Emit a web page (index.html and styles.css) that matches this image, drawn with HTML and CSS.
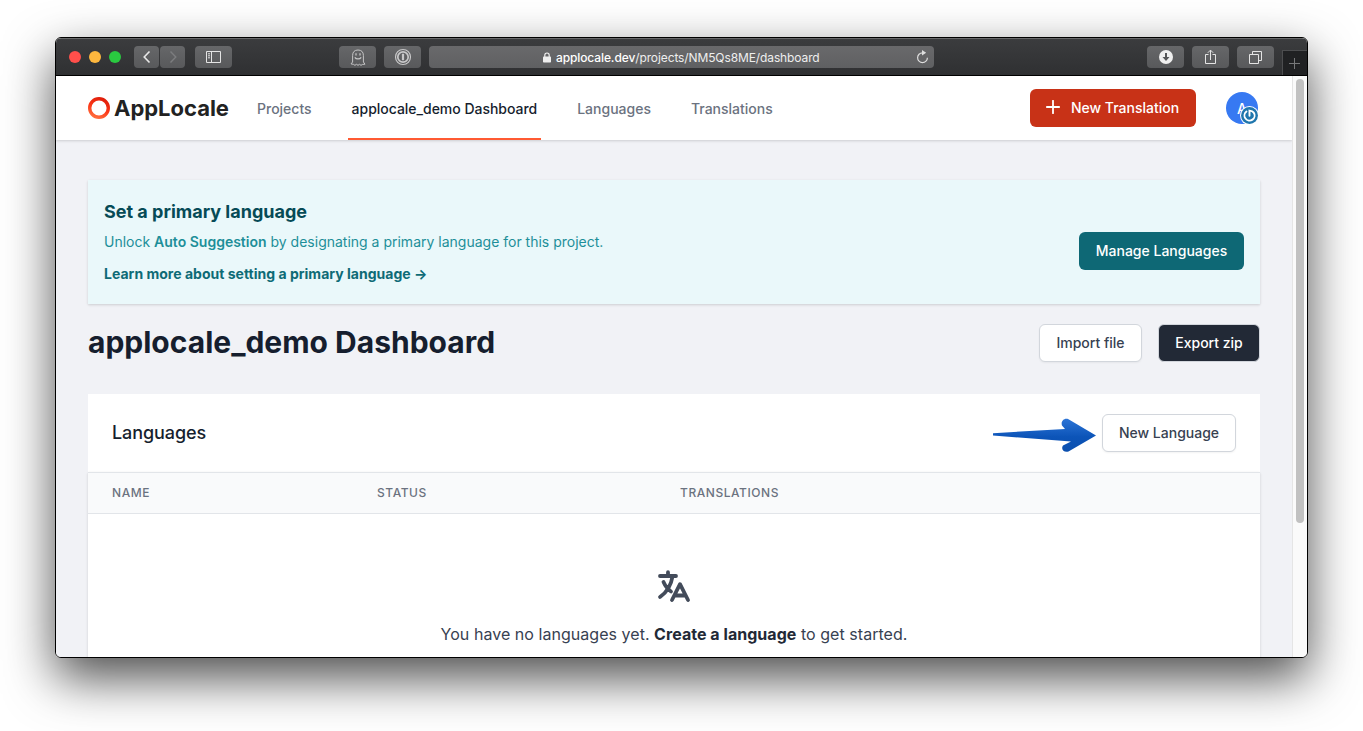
FILE: index.html
```html
<!DOCTYPE html>
<html lang="en">
<head>
<meta charset="utf-8">
<title>applocale_demo Dashboard</title>
<link rel="stylesheet" href="styles.css">
</head>
<body>
<div class="window">
  <div class="toolbar">
    <div class="lights"><i class="light red"></i><i class="light yellow"></i><i class="light green"></i></div>
    <div class="history">
      <span class="tool small"><svg width="10" height="14" viewBox="0 0 10 14"><path d="M7.5 1.5 2.2 7l5.3 5.5" fill="none" stroke="#e8e8e8" stroke-width="1.6"/></svg></span>
      <span class="tool small"><svg width="10" height="14" viewBox="0 0 10 14"><path d="M2.5 1.5 7.8 7l-5.3 5.5" fill="none" stroke="#7c7d7f" stroke-width="1.4"/></svg></span>
    </div>
    <span class="tool sidebar"><svg width="15" height="12" viewBox="0 0 15 12" fill="none" stroke="#e4e4e4"><path d="M.5.5h14v11H.5zM5.5.5v11M2 2.8h2M2 4.8h2M2 6.8h2"/></svg></span>
    <span class="tool ghost"><svg width="16" height="17" viewBox="0 0 16 17" fill="none" stroke="#c4c4c5"><path d="M2.6 13V6.500C2.600 3 4.500 1 8 1s5.400 2 5.400 5.500V13l1.600 2.200-2.400.2-1.600.9-1.500-1-1.500 1-1.500-1-1.600 1-1.500-1-2.400-.4z"/><path d="M6 4.200v2.300M10 4.200v2.300M4.800 8.300c1.400 2.200 5 2.200 6.400 0" stroke-width="1.300"/></svg></span>
    <span class="tool onepass"><svg width="18" height="18" viewBox="0 0 18 18" fill="none" stroke="#c8c8c9"><circle cx="9" cy="9" r="7.500" stroke-width="1.200"/><circle cx="9" cy="9" r="5.200" stroke-width="1.700"/><path d="M9 5.800v6.400" stroke-width="2.200"/></svg></span>
    <div class="address">
      <svg class="lock" width="8" height="11" viewBox="0 0 8 11"><path d="M1.800 5V3.200a2.200 2.200 0 0 1 4.400 0V5" fill="none" stroke="#eee" stroke-width="1.200"/><rect y="4.600" width="8" height="6" rx=".8" fill="#eee"/></svg>
      <span class="url"><span class="host">applocale.dev</span>/projects/NM5Qs8ME/dashboard</span>
      <svg class="reload" width="13" height="14" viewBox="0 0 13 14"><path d="M6.500 2.800A4.900 4.900 0 1 0 11.400 7.700" fill="none" stroke="#ddd" stroke-width="1.200"/><path d="M6 0v5.600l4.200-2.800z" fill="#ddd"/></svg>
    </div>
    <span class="tool download"><svg width="14" height="14" viewBox="0 0 14 14"><circle cx="7" cy="7" r="7" fill="#efefef"/><path d="M7 3v6" stroke="#555658" stroke-width="2"/><path d="M3.500 7h7L7 11z" fill="#555658"/></svg></span>
    <span class="tool share"><svg width="11" height="16" viewBox="0 0 11 16" fill="none" stroke="#e4e4e4"><path d="M3.500 5.500h-3v9h10v-9h-3M5.500 11V1.200M2.800 3.800 5.500 1.100l2.700 2.700"/></svg></span>
    <span class="tool tabs"><svg width="13" height="13" viewBox="0 0 13 13" fill="none" stroke="#e4e4e4"><path d="M.5 3.500h9v9h-9zM3.500 3.500v-3h9v9h-3"/></svg></span>
    <span class="newtab"><svg width="11" height="11" viewBox="0 0 11 11"><path d="M5.500 0v11M0 5.500h11" stroke="#77787a"/></svg></span>
  </div>
  <div class="viewport">
    <div class="page">
      <header class="header">
        <svg class="mark" width="22" height="22" viewBox="0 0 22 22"><defs><linearGradient id="ring" x1=".7" y1="0" x2=".3" y2="1"><stop offset="0" stop-color="#e01f0b"/><stop offset=".5" stop-color="#fb3617"/><stop offset="1" stop-color="#ff6a3b"/></linearGradient></defs><circle cx="11" cy="11" r="9.300" fill="none" stroke="url(#ring)" stroke-width="3.400"/></svg>
        <span class="brand">AppLocale</span>
        <nav class="nav">
          <a class="link projects">Projects</a>
          <a class="link active">applocale_demo Dashboard</a>
          <a class="link languages">Languages</a>
          <a class="link">Translations</a>
        </nav>
        <button class="btn primary"><svg width="14" height="14" viewBox="0 0 14 14"><path d="M7 .8v12.400M.8 7h12.400" stroke="#fff" stroke-width="1.800" stroke-linecap="round"/></svg><span>New Translation</span></button>
        <div class="avatar">A<svg class="badge" width="19" height="19" viewBox="0 0 18 18"><circle cx="9" cy="9" r="9" fill="#fff"/><circle cx="9" cy="9" r="8" fill="#1f76ad"/><path d="M6.100 5.200A4.800 4.800 0 1 0 13 6.300Q11.900 4.700 9 4.400V9.300" fill="none" stroke="#fff" stroke-width="1.800" stroke-linecap="round"/></svg></div>
      </header>
      <main class="main">
        <section class="notice">
          <div class="notice-text">
            <h2 class="notice-title">Set a primary language</h2>
            <p class="notice-body">Unlock <strong>Auto Suggestion</strong> by designating a primary language for this project.</p>
            <a class="notice-link">Learn more about setting a primary language →</a>
          </div>
          <button class="btn teal"><span>Manage Languages</span></button>
        </section>
        <div class="heading">
          <h1 class="title">applocale_demo Dashboard</h1>
          <button class="btn plain import"><span>Import file</span></button>
          <button class="btn dark"><span>Export zip</span></button>
        </div>
        <section class="card">
          <div class="card-head">
            <h3 class="card-title">Languages</h3>
            <svg class="arrow" width="104" height="36" viewBox="0 0 104 36"><defs><linearGradient id="blue" x1="0" y1="0" x2="0" y2="1"><stop offset="0" stop-color="#2c74d6"/><stop offset=".55" stop-color="#0c54b8"/><stop offset="1" stop-color="#0b4fae"/></linearGradient></defs><path d="M1 16.200 73 12 70 8.500C68.500 4.500 72 .5 76.500 2.200L104 18.500 76.500 34.500C72 36 68.500 32 71 28.500L79 24.600 1 18.500z" fill="url(#blue)"/></svg>
            <button class="btn plain newlang"><span>New Language</span></button>
          </div>
          <div class="table">
            <div class="columns"><span>NAME</span><span>STATUS</span><span>TRANSLATIONS</span></div>
            <div class="empty">
              <svg width="34" height="34" viewBox="0 0 34 34" fill="none" stroke="#434b5a" stroke-width="3.800" stroke-linecap="round" stroke-linejoin="round"><path d="M3 7h16M11 3.200V7M15.500 7.500C14 17 9.500 23.500 3 28M6.500 13c2 4.500 4.500 7.500 7.500 9.500M15 31 23 15.200 31 31M18 26.500h10"/></svg>
              <p class="empty-text">You have no languages yet. <strong>Create a language</strong> to get started.</p>
            </div>
          </div>
        </section>
      </main>
    </div>
    <div class="scrollbar"><div class="thumb"></div></div>
  </div>
</div>
</body>
</html>
```

FILE: styles.css
```css
* { box-sizing: border-box; }
body {
  margin: 0;
  height: 731px;
  overflow: hidden;
  padding: 37px 55px 0;
  background: #fff;
  font-family: Inter, "Liberation Sans", sans-serif;
  -webkit-font-smoothing: antialiased;
}
h1, h2, h3, p { margin: 0; }
svg { display: block; flex: none; }
button { font: inherit; }
.window {
  width: 1253px;
  height: 621px;
  border: 1px solid #000;
  border-radius: 6px;
  overflow: hidden;
  box-shadow: 0 20px 50px rgba(0, 0, 0, .7);
}
.toolbar {
  height: 38px;
  display: flex;
  align-items: center;
  padding-left: 13px;
  background: linear-gradient(#3b3c3e, #2f3032);
  border-top: 1px solid #68696a;
  border-bottom: 1px solid #000;
}
.lights { display: flex; gap: 8px; width: 65px; }
.light { width: 12px; height: 12px; border-radius: 50%; }
.red { background: #ff4f4b; }
.yellow { background: #fdb73e; }
.green { background: #2ac940; }
.history { display: flex; gap: 1px; }
.tool {
  width: 37px;
  height: 22px;
  flex: none;
  display: flex;
  align-items: center;
  justify-content: center;
  border-radius: 4px;
  background: linear-gradient(#666769, #58595b);
}
.small { width: 25px; }
.sidebar { margin-left: 10px; }
.ghost { margin-left: 107px; }
.onepass { margin-left: 8px; }
.address {
  width: 505px;
  height: 22px;
  margin-left: 8px;
  padding: 0 5px 0 114px;
  display: flex;
  align-items: center;
  border-radius: 4px;
  background: linear-gradient(#69696b, #5f6062);
  color: #eee;
  font-size: 12px;
  letter-spacing: -.11px;
}
.url { margin-left: 5px; flex: 1; white-space: nowrap; }
.host { font-weight: 500; color: #fff; }
.download { margin-left: 213px; }
.share, .tabs { margin-left: 8px; }
.newtab {
  align-self: flex-end;
  margin-left: 8px;
  width: 25px;
  height: 25px;
  display: flex;
  align-items: center;
  justify-content: center;
  padding-right: 2px;
  background: #202123;
  border: 1px solid #4c4d4f;
  border-width: 1px 0 0 1px;
}
.viewport { display: flex; height: 581px; }
.page { width: 1236px; background: #f1f2f6; }
.scrollbar {
  width: 15px;
  padding: 3px 3px 0;
  background: #fafafa;
  border-left: 1px solid #e5e5e5;
}
.thumb { width: 8px; height: 444px; border-radius: 4px; background: #c1c1c1; }
.header {
  height: 64px;
  display: flex;
  align-items: center;
  padding: 0 34px 0 32px;
  background: #fff;
  box-shadow: 0 1px 3px rgba(0, 0, 0, .1), 0 1px 2px rgba(0, 0, 0, .06);
}
.brand { width: 115px; margin-left: 4px; font-size: 22px; font-weight: 700; letter-spacing: -.02px; color: #222; }
.nav { display: flex; align-self: stretch; flex: 1; margin-left: 24px; }
.link {
  display: flex;
  align-items: center;
  padding: 2px 4px 0;
  border-bottom: 2px solid transparent;
  font-size: 14px;
  font-weight: 500;
  color: #6b7280;
  white-space: nowrap;
}
.link + .link { margin-left: 32px; }
.link.active { letter-spacing: -.025px; color: #161e2e; border-color: #ff5a33; }
.btn {
  height: 38px;
  flex: none;
  display: flex;
  align-items: center;
  justify-content: center;
  padding: 0 0 2px;
  border: 1px solid transparent;
  border-radius: 6px;
  font-size: 14px;
  font-weight: 500;
  white-space: nowrap;
}
.primary { width: 166px; gap: 11px; padding-right: 1px; background: #c83217; color: #fff; }
.avatar {
  position: relative;
  width: 32px;
  height: 32px;
  margin-left: 30px;
  display: flex;
  align-items: center;
  justify-content: center;
  border-radius: 50%;
  background: #3779f2;
  color: #fff;
  font-size: 14px;
  font-weight: 500;
}
.badge { position: absolute; right: -1px; bottom: -1px; }
.main { padding: 40px 32px 0; }
.notice {
  height: 124px;
  display: flex;
  justify-content: space-between;
  align-items: center;
  padding: 0 16px;
  background: #eaf8fa;
  box-shadow: 0 1px 3px rgba(0, 0, 0, .1), 0 1px 2px rgba(0, 0, 0, .06);
}
.notice-text { align-self: flex-start; padding-top: 20px; }
.notice-title { font-size: 18px; line-height: 24px; font-weight: 700; color: #064b56; }
.notice-body { margin-top: 8px; font-size: 14px; line-height: 20px; color: #1d8f99; }
.notice-body strong { font-weight: 600; }
.notice-link { display: block; margin-top: 12px; font-size: 14px; line-height: 20px; font-weight: 700; letter-spacing: .015px; color: #0e6b76; }
.teal { width: 165px; margin-top: 18px; background: #0e6875; color: #fff; }
.heading { height: 38px; display: flex; align-items: center; margin-top: 20px; }
.title { flex: 1; padding-bottom: 2px; font-size: 30px; line-height: 36px; font-weight: 700; color: #161e2e; white-space: nowrap; }
.plain { background: #fff; border-color: #d2d6dc; color: #374151; box-shadow: 0 1px 2px rgba(0, 0, 0, .05); }
.import { width: 103px; }
.dark { width: 102px; margin-left: 16px; background: #222936; border-color: #d2d6dc; color: #fff; }
.card { margin-top: 32px; background: #fff; }
.card-head { height: 78px; display: flex; align-items: center; padding: 0 24px; }
.card-title { flex: 1; padding-bottom: 2px; font-size: 18px; font-weight: 500; letter-spacing: -.08px; color: #161e2e; }
.arrow { margin: 4px 6px 0 0; }
.newlang { width: 134px; }
.table { height: 222px; box-shadow: 0 1px 3px rgba(0, 0, 0, .1), 0 1px 2px rgba(0, 0, 0, .06); }
.columns {
  height: 42px;
  display: grid;
  grid-template-columns: 265px 303px 1fr;
  align-items: center;
  padding: 0 24px 2px;
  background: #f9fafb;
  border: 1px solid #e2e5e9;
  border-width: 1px 0;
  font-size: 12px;
  font-weight: 500;
  letter-spacing: .56px;
  color: #6b7280;
}
.empty { display: flex; flex-direction: column; align-items: center; padding-top: 55px; }
.empty-text { margin-top: 19px; font-size: 16px; line-height: 24px; letter-spacing: .04px; color: #374151; }
.empty-text strong { font-weight: 700; color: #222936; }
```
